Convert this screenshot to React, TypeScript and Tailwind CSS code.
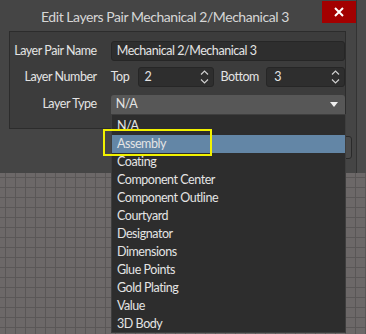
import React from "react";

const font = { fontFamily: 'Lato,"Noto Sans",sans-serif' };

function Spin() {
  return (
    <svg width="9" height="14" viewBox="0 0 9 14" className="shrink-0">
      <path d="M1 4.5 L4.5 1 L8 4.5" fill="none" stroke="#cfcfcf" strokeWidth="1.2" />
      <path d="M1 9.5 L4.5 13 L8 9.5" fill="none" stroke="#cfcfcf" strokeWidth="1.2" />
    </svg>
  );
}

const items = [
  "N/A",
  "Assembly",
  "Coating",
  "Component Center",
  "Component Outline",
  "Courtyard",
  "Designator",
  "Dimensions",
  "Glue Points",
  "Gold Plating",
  "Value",
  "3D Body",
];

export default function App() {
  return (
    <div
      className="relative w-[366px] h-[334px] overflow-hidden bg-[#6c6868] bg-[linear-gradient(to_right,#5a5757_1px,transparent_1px),linear-gradient(to_bottom,#5a5757_1px,transparent_1px)] bg-[size:10px_10px] bg-[position:5px_7px] text-[12.5px] tracking-[-0.45px] text-[#e4e4e4]"
      style={font}
    >
      <div className="flex h-[173px] w-[366px]">
        <div className="flex w-[357px] flex-col bg-[#454545] border-r border-[#333]">
          {/* title bar */}
          <div className="flex h-[31px] items-start">
            <div className="flex-1 pl-[41px] pt-[6px] text-[14px] tracking-[-0.45px] text-[#d6d6d6] whitespace-nowrap">
              Edit Layers Pair Mechanical 2/Mechanical 3
            </div>
            <div className="mt-[1px] flex h-[22px] w-[34px] items-center justify-center bg-[#a30000]">
              <svg width="10" height="10" viewBox="0 0 10 10">
                <path d="M1 1 L9 9 M9 1 L1 9" stroke="#fff" strokeWidth="2" />
              </svg>
            </div>
          </div>
          {/* group panel */}
          <div className="ml-[9px] flex h-[98px] w-[337px] flex-col border border-[#2c2c2c] bg-[#3c3c3c] pt-[9px]">
            <div className="flex h-[20px] items-center">
              <div className="w-[87px] text-right whitespace-nowrap">Layer Pair Name</div>
              <div className="ml-[14px] flex h-[20px] w-[235px] items-center rounded-[3px] border border-[#262626] bg-[#2e2e2e] pl-[5px]">
                Mechanical 2/Mechanical 3
              </div>
            </div>
            <div className="mt-[6px] flex h-[20px] items-center">
              <div className="w-[87px] text-right whitespace-nowrap">Layer Number</div>
              <div className="ml-[14px] w-[27px]">Top</div>
              <div className="flex h-[20px] w-[77px] items-center justify-between rounded-[3px] border border-[#262626] bg-[#2e2e2e] pl-[6px] pr-[4px]">
                <span>2</span>
                <Spin />
              </div>
              <div className="ml-[6px] w-[46px]">Bottom</div>
              <div className="flex h-[20px] w-[79px] items-center justify-between rounded-[3px] border border-[#262626] bg-[#2e2e2e] pl-[7px] pr-[4px]">
                <span>3</span>
                <Spin />
              </div>
            </div>
            <div className="mt-[8px] flex h-[19px] items-center">
              <div className="w-[87px] text-right whitespace-nowrap">Layer Type</div>
              <div className="ml-[14px] flex h-[20px] w-[235px] items-center justify-between rounded-t-[3px] bg-[#575757] pl-[5px] pr-[7px]">
                <span>N/A</span>
                <svg width="8" height="5" viewBox="0 0 8 5">
                  <path d="M0 0 L8 0 L4 5 Z" fill="#f0f0f0" />
                </svg>
              </div>
            </div>
          </div>
          {/* footer buttons (mostly covered) */}
          <div className="mt-[7px] flex justify-end gap-[6px] pr-[4px]">
            <div className="h-[23px] w-[75px] rounded-[3px] border border-[#2a2a2a] bg-[#4a4a4a]" />
            <div className="h-[23px] w-[75px] rounded-[3px] border border-[#2a2a2a] bg-[#4a4a4a]" />
          </div>
        </div>
        <div className="flex-1 bg-[#4b4b4b]" />
      </div>

      {/* dropdown list */}
      <div className="absolute left-[111px] top-[114px] flex h-[219px] w-[235px] flex-col border border-[#3e3e3e] bg-[#2d2d2d] pt-[2px]">
        {items.map((it) => (
          <div
            key={it}
            className={
              it === "Assembly"
                ? "flex h-[18px] items-center bg-[#6386a6] pl-[5px] whitespace-nowrap"
                : "flex h-[18px] items-center pl-[5px] whitespace-nowrap"
            }
          >
            {it}
          </div>
        ))}
      </div>

      {/* yellow annotation */}
      <div className="absolute left-[103px] top-[129px] h-[27px] w-[109px] border-2 border-[#f2f200]" />
    </div>
  );
}
